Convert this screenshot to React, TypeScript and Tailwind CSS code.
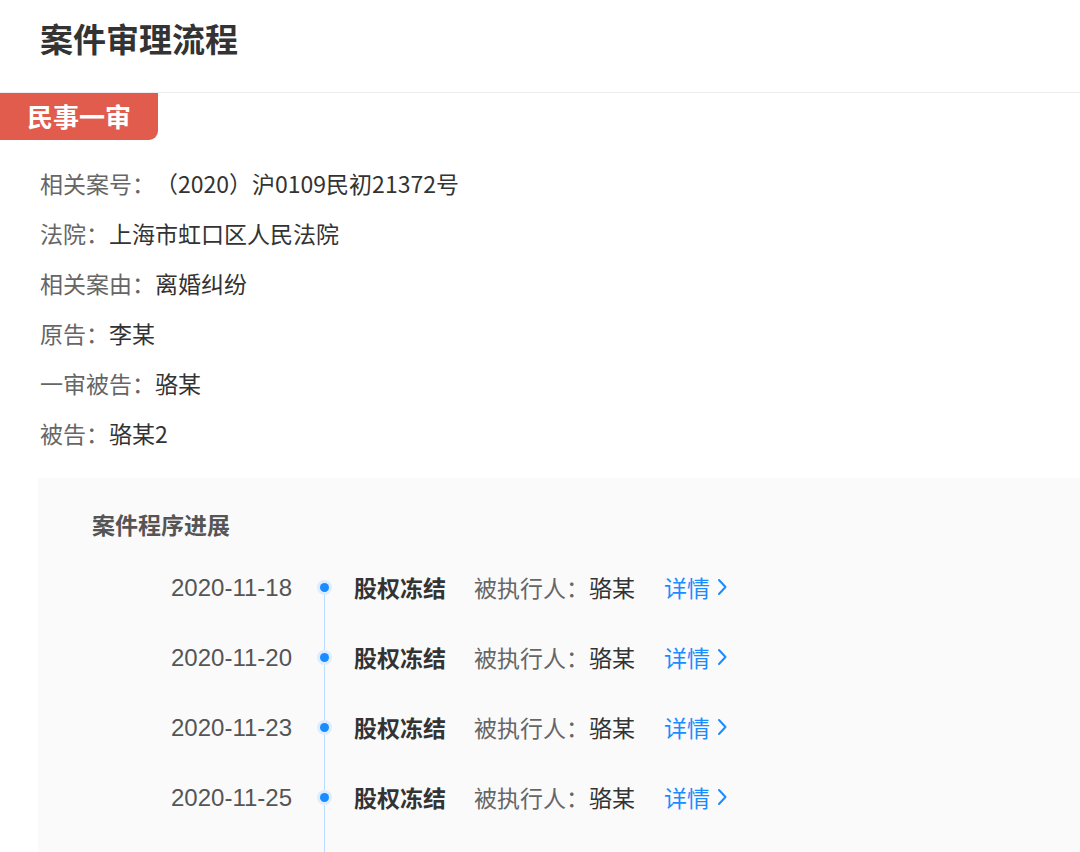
import React from "react";

const info: [string, string][] = [
  ["相关案号：", "（2020）沪0109民初21372号"],
  ["法院：", "上海市虹口区人民法院"],
  ["相关案由：", "离婚纠纷"],
  ["原告：", "李某"],
  ["一审被告：", "骆某"],
  ["被告：", "骆某2"],
];

const events = ["2020-11-18", "2020-11-20", "2020-11-23", "2020-11-25"];

function Chevron() {
  return (
    <svg width="11" height="20" viewBox="0 0 11 20" fill="none" className="ml-[7px]">
      <path d="M2 3 L8.5 10 L2 17" stroke="#1a8cff" strokeWidth="2" strokeLinecap="round" strokeLinejoin="round" />
    </svg>
  );
}

export default function App() {
  return (
    <div
      className="w-[1080px] h-[852px] overflow-hidden bg-white"
      style={{ fontFamily: '"Noto Sans CJK SC", "Noto Sans", sans-serif' }}
    >
      <div className="h-[93px] border-b-[1.5px] border-[#ededed] flex items-center pl-[40px]">
        <h1 className="text-[33px] font-bold text-[#333] leading-none -mt-[16px]">案件审理流程</h1>
      </div>
      <div className="flex">
        <div className="h-[47px] w-[158px] bg-[#e15c4c] rounded-br-[9px] flex items-center pl-[27px]">
          <span className="text-white font-bold text-[26px] leading-none -mt-[2px]">民事一审</span>
        </div>
      </div>
      <div className="mt-[18px] pl-[40px] flex flex-col">
        {info.map(([k, v]) => (
          <div key={k} className="h-[50px] flex items-center text-[23px] leading-none">
            <span className="text-[#666]">{k}</span>
            <span className="text-[#333]">{v}</span>
          </div>
        ))}
      </div>
      <div className="mt-[20px] ml-[38px] bg-[#fafafa] h-[400px] pt-[31px]">
        <div className="pl-[54px] h-[30px] flex items-center text-[23px] font-bold text-[#555] leading-none">
          案件程序进展
        </div>
        <div className="mt-[14px] flex flex-col">
          {events.map((d, i) => (
            <div key={d} className="h-[70px] flex items-center">
              <div
                className="w-[254px] text-right text-[24px] text-[#555] leading-none"
                style={{ fontFamily: '"Liberation Sans", Arial, sans-serif' }}
              >
                {d}
              </div>
              <div className="relative w-[62px] h-full">
                <div
                  className={`absolute left-[32px] w-px bg-[#b9dcff] bottom-0 ${i === 0 ? "top-[35px]" : "top-0"}`}
                />
                <div className="absolute left-[25px] top-[27px] w-[15px] h-[15px] rounded-full bg-[#dcedff] flex items-center justify-center">
                  <div className="w-[9px] h-[9px] rounded-full bg-[#1a8cff]" />
                </div>
              </div>
              <span className="text-[23px] font-bold text-[#333] leading-none -mt-[2px]">股权冻结</span>
              <span className="ml-[28px] text-[23px] text-[#666] leading-none -mt-[2px]">被执行人：</span>
              <span className="text-[23px] text-[#333] leading-none -mt-[2px]">骆某</span>
              <span className="ml-[29px] text-[23px] text-[#1a8cff] leading-none flex items-center -mt-[2px]">
                详情
                <Chevron />
              </span>
            </div>
          ))}
          <div className="h-[200px] flex">
            <div className="w-[254px]" />
            <div className="relative w-[62px] h-full">
              <div className="absolute left-[32px] w-px bg-[#b9dcff] top-0 bottom-0" />
            </div>
          </div>
        </div>
      </div>
    </div>
  );
}
